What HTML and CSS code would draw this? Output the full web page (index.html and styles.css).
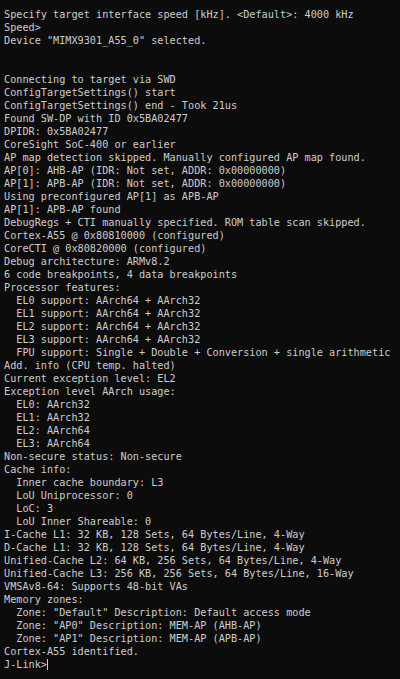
FILE: index.html
```html
<!DOCTYPE html>
<html lang="en">
<head>
<meta charset="utf-8">
<title>J-Link Commander</title>
<link rel="stylesheet" href="styles.css">
</head>
<body>
<main class="terminal">
<pre class="output">Specify target interface speed [kHz]. &lt;Default&gt;: 4000 kHz
Speed&gt;
Device "MIMX9301_A55_0" selected.


Connecting to target via SWD
ConfigTargetSettings() start
ConfigTargetSettings() end - Took 21us
Found SW-DP with ID 0x5BA02477
DPIDR: 0x5BA02477
CoreSight SoC-400 or earlier
AP map detection skipped. Manually configured AP map found.
AP[0]: AHB-AP (IDR: Not set, ADDR: 0x00000000)
AP[1]: APB-AP (IDR: Not set, ADDR: 0x00000000)
Using preconfigured AP[1] as APB-AP
AP[1]: APB-AP found
DebugRegs + CTI manually specified. ROM table scan skipped.
Cortex-A55 @ 0x80810000 (configured)
CoreCTI @ 0x80820000 (configured)
Debug architecture: ARMv8.2
6 code breakpoints, 4 data breakpoints
Processor features:
  EL0 support: AArch64 + AArch32
  EL1 support: AArch64 + AArch32
  EL2 support: AArch64 + AArch32
  EL3 support: AArch64 + AArch32
  FPU support: Single + Double + Conversion + single arithmetic
Add. info (CPU temp. halted)
Current exception level: EL2
Exception level AArch usage:
  EL0: AArch32
  EL1: AArch32
  EL2: AArch64
  EL3: AArch64
Non-secure status: Non-secure
Cache info:
  Inner cache boundary: L3
  LoU Uniprocessor: 0
  LoC: 3
  LoU Inner Shareable: 0
I-Cache L1: 32 KB, 128 Sets, 64 Bytes/Line, 4-Way
D-Cache L1: 32 KB, 128 Sets, 64 Bytes/Line, 4-Way
Unified-Cache L2: 64 KB, 256 Sets, 64 Bytes/Line, 4-Way
Unified-Cache L3: 256 KB, 256 Sets, 64 Bytes/Line, 16-Way
VMSAv8-64: Supports 48-bit VAs
Memory zones:
  Zone: "Default" Description: Default access mode
  Zone: "AP0" Description: MEM-AP (AHB-AP)
  Zone: "AP1" Description: MEM-AP (APB-AP)
Cortex-A55 identified.
J-Link&gt;<span class="cursor"></span></pre>
</main>
</body>
</html>
```

FILE: styles.css
```css
html, body {
  margin: 0;
  padding: 0;
  background: #0c0c0c;
  width: 400px;
  height: 679px;
  overflow: hidden;
}

.terminal {
  padding: 8px 0 0 4px;
}

.output {
  margin: 0;
  font-family: "DejaVu Sans Mono", monospace;
  font-size: 10.2px;
  line-height: 13px;
  color: #cccccc;
  white-space: pre;
}

.cursor {
  display: inline-block;
  width: 1px;
  height: 11px;
  background: #cccccc;
  vertical-align: -2px;
}
```
